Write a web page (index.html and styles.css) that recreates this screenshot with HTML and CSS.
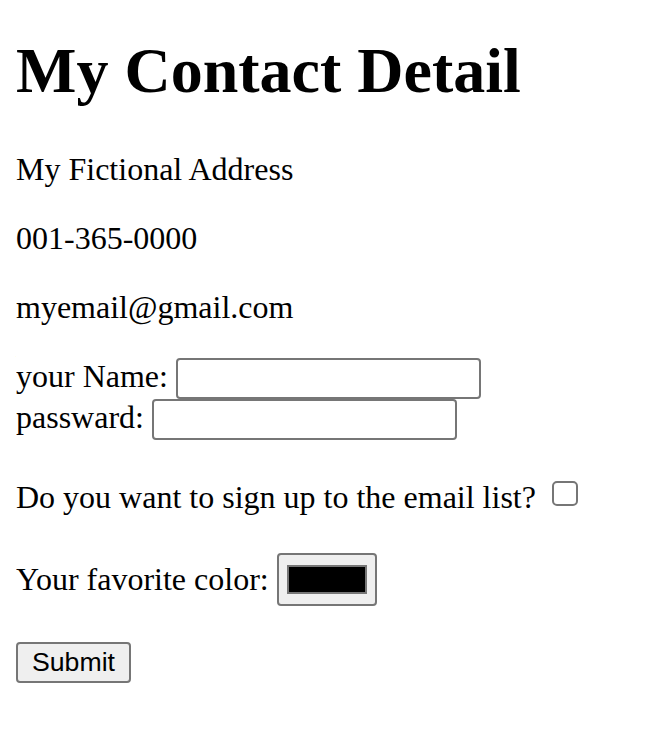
FILE: index.html
```html
<!DOCTYPE html>
<html>
<head>
<meta charset="utf-8">
<title>My Contact Detail</title>
<link rel="stylesheet" href="styles.css">
</head>
<body>
<h1 class="title">My Contact Detail</h1>
<p class="line">My Fictional Address</p>
<p class="line">001-365-0000</p>
<p class="line">myemail@gmail.com</p>
<form class="form">
<label class="label">your Name:</label> <input class="field" type="text"><br>
<label class="label">passward:</label> <input class="field" type="password"><br>
<p class="line">Do you want to sign up to the email list? <input class="check" type="checkbox"></p>
<p class="line">Your favorite color: <span class="color-wrap"><input class="color" type="color" value="#000000"></span></p>
<input class="submit" type="submit" value="Submit">
</form>
</body>
</html>
```
FILE: styles.css
```css
html, body {
  background: #ffffff;
}
body {
  margin: 16px;
  font-family: "Liberation Serif", "Times New Roman", serif;
  font-size: 32px;
  color: #000000;
}
.title {
  font-size: 64px;
  font-weight: bold;
  margin: 18px 0 43px;
}
.line {
  margin: 32px 0;
}
.form {
  margin: 0;
}
.field {
  box-sizing: border-box;
  width: 305px;
  height: 41px;
  margin: 0;
  padding: 2px 4px;
  border: 2px solid #767676;
  border-radius: 4px;
  background: #ffffff;
  font-family: "Liberation Sans", Arial, sans-serif;
  font-size: 26.67px;
  vertical-align: baseline;
}
.check {
  -webkit-appearance: none;
  appearance: none;
  box-sizing: border-box;
  width: 26px;
  height: 25px;
  margin: 9px 6px 0 8px;
  border: 2px solid #767676;
  border-radius: 5px;
  background: #ffffff;
  vertical-align: 2px;
}
.color-wrap {
  display: inline-block;
  margin: 5px 0 4px;
  vertical-align: -4px;
}
.color {
  display: block;
  box-sizing: border-box;
  width: 100px;
  height: 53px;
  margin: 0;
  padding: 0;
  border: 2px solid #767676;
  border-radius: 4px;
  background: #efefef;
}
.color::-webkit-color-swatch-wrapper {
  padding: 10px 8px;
}
.color::-webkit-color-swatch {
  border: 2px solid #777777;
  border-radius: 0;
}
.submit {
  box-sizing: border-box;
  width: 115px;
  height: 41px;
  margin: 0;
  padding: 2px 0;
  border: 2px solid #767676;
  border-radius: 4px;
  background: #efefef;
  font-family: "Liberation Sans", Arial, sans-serif;
  font-size: 26.67px;
  color: #000000;
}
```
